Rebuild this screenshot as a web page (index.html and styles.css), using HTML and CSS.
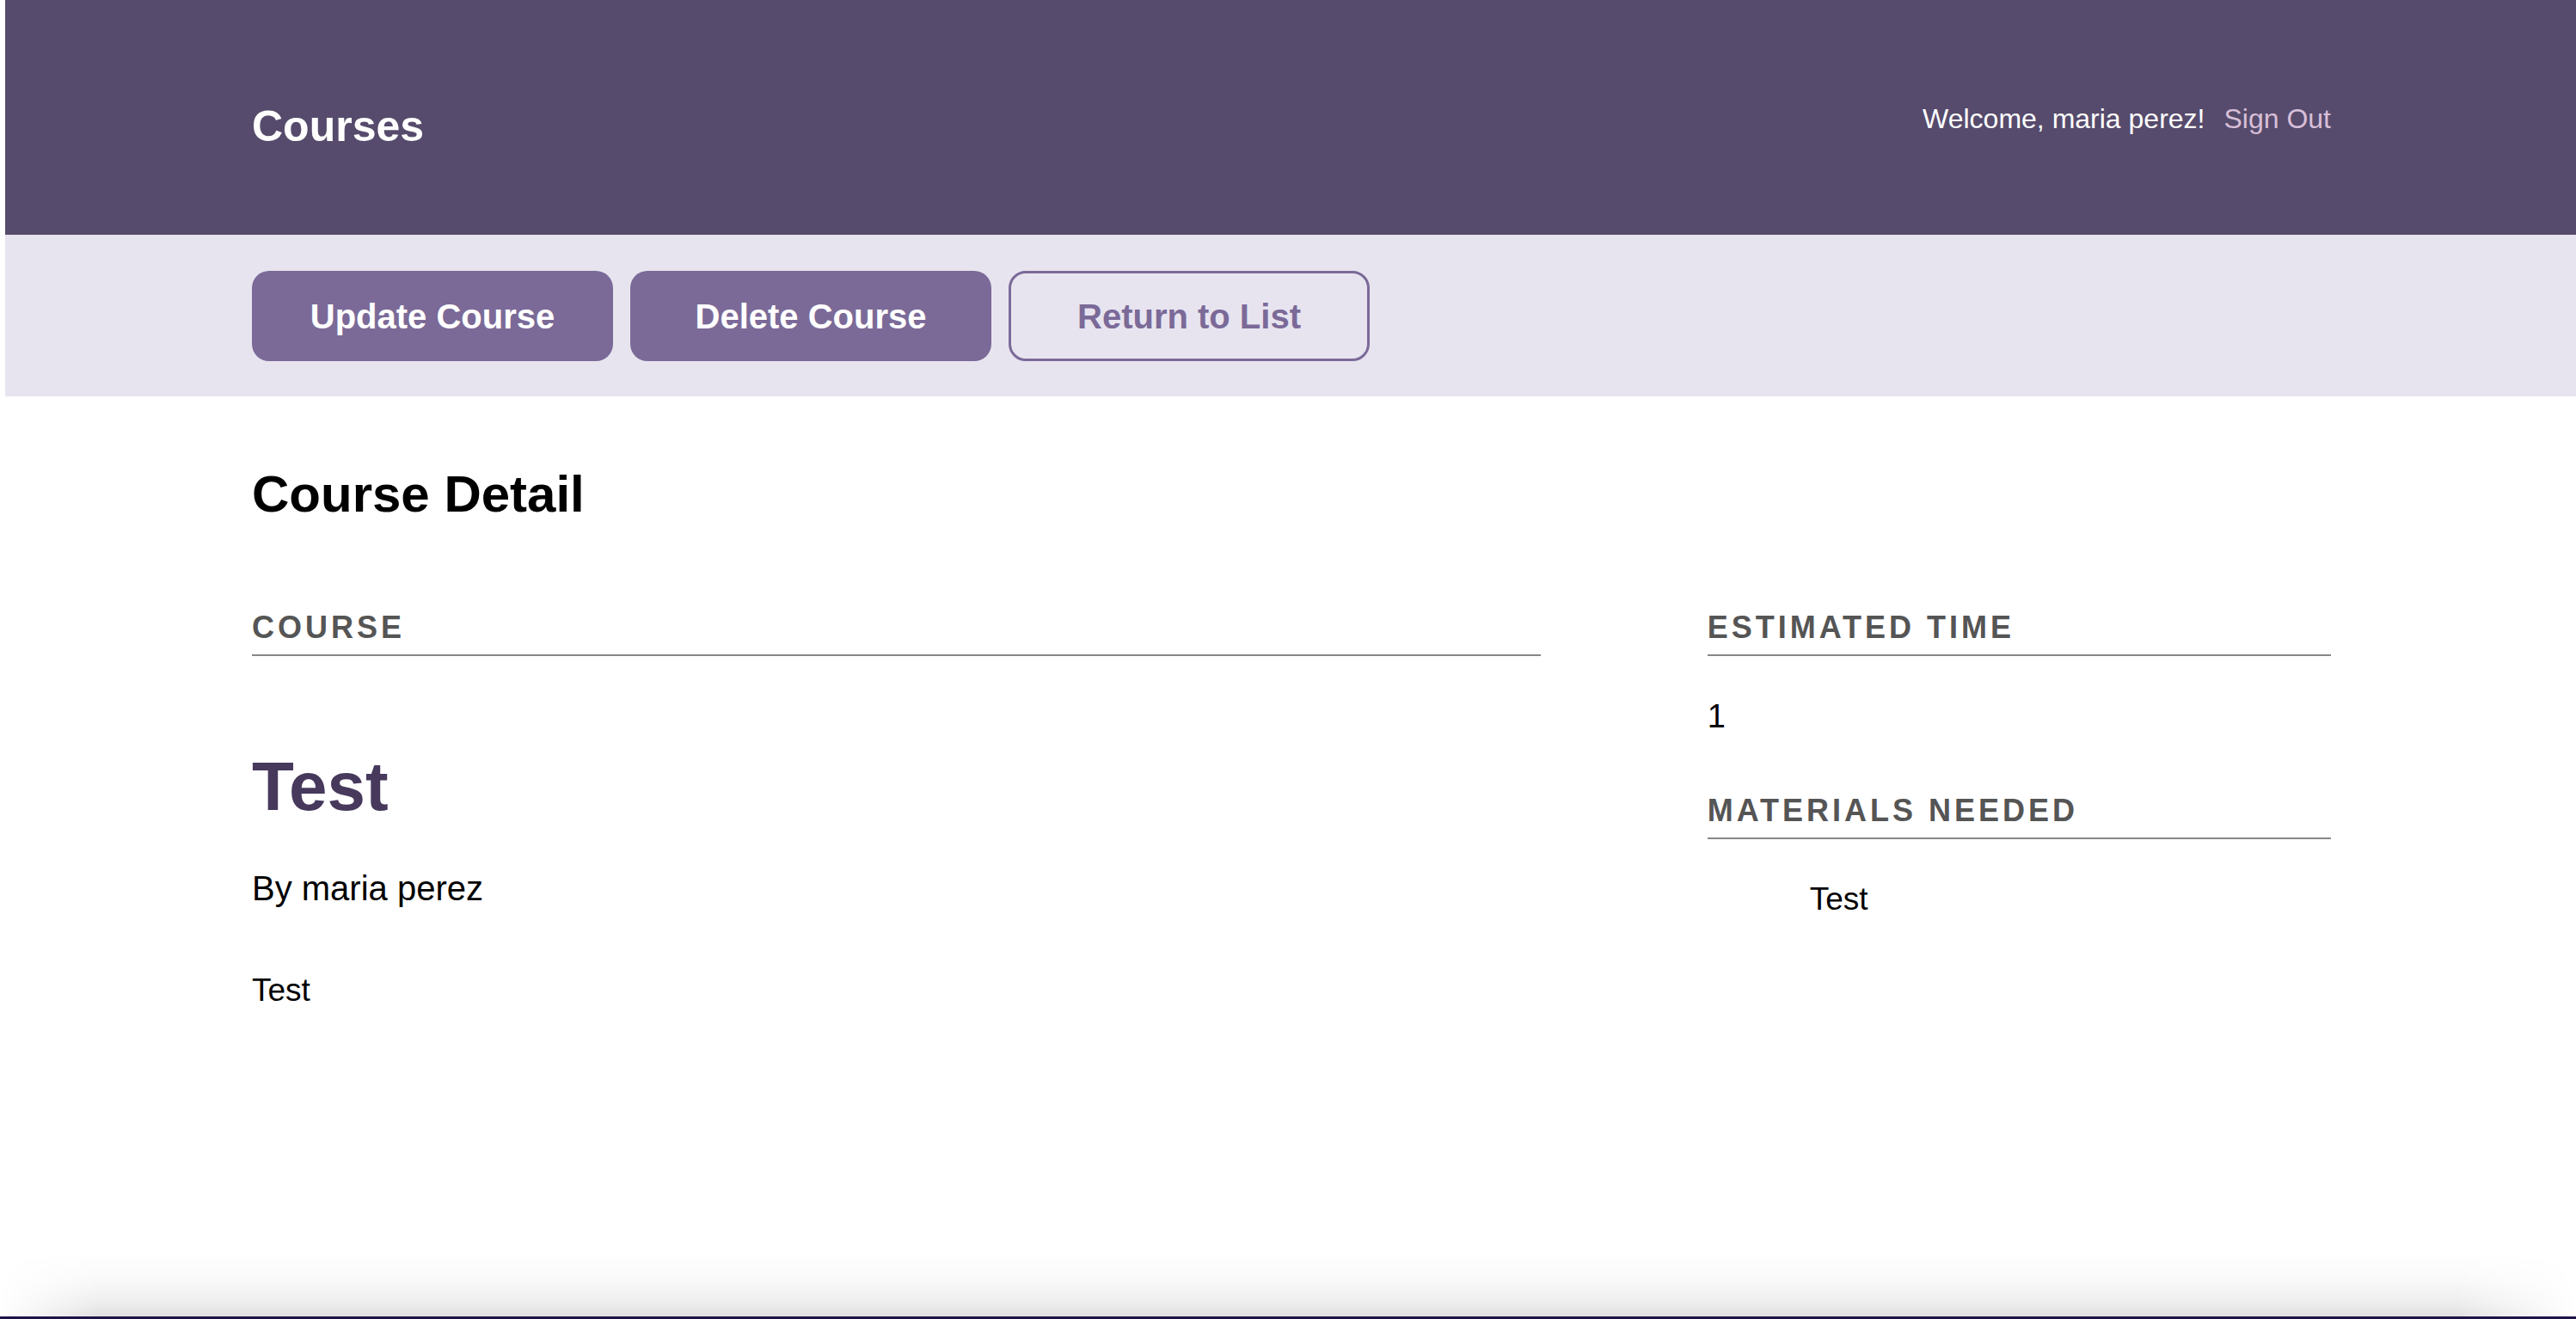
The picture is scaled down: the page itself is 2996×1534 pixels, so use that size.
FILE: index.html
```html
<!DOCTYPE html>
<html lang="en">
<head>
<meta charset="utf-8">
<title>Courses</title>
<link rel="stylesheet" href="styles.css">
</head>
<body>
<div class="page">
  <header class="header">
    <div class="wrap header-inner">
      <h1 class="logo">Courses</h1>
      <nav class="user-nav">
        <span>Welcome, maria perez!</span>
        <a class="sign-out" href="#">Sign Out</a>
      </nav>
    </div>
  </header>
  <div class="actions-bar">
    <div class="wrap actions">
      <a class="button" href="#">Update Course</a>
      <a class="button" href="#">Delete Course</a>
      <a class="button button-secondary" href="#">Return to List</a>
    </div>
  </div>
  <main class="main">
    <div class="wrap">
      <h2 class="page-title">Course Detail</h2>
      <div class="detail-grid">
        <div class="detail-col">
          <h3 class="label">COURSE</h3>
          <h4 class="course-title">Test</h4>
          <p class="byline">By maria perez</p>
          <p class="description">Test</p>
        </div>
        <div class="detail-col">
          <h3 class="label">ESTIMATED TIME</h3>
          <p class="time">1</p>
          <h3 class="label label-spaced">MATERIALS NEEDED</h3>
          <ul class="materials">
            <li>Test</li>
          </ul>
        </div>
      </div>
    </div>
  </main>
  <div class="edge-shadow"></div>
  <div class="edge"></div>
</div>
</body>
</html>
```

FILE: styles.css
```css
* {
  box-sizing: border-box;
}

html, body {
  margin: 0;
  padding: 0;
}

body {
  font-family: "Liberation Sans", Arial, Helvetica, sans-serif;
  color: #000;
  background: #fff;
}

.page {
  min-height: 100vh;
  display: flex;
  flex-direction: column;
}

.wrap {
  width: 2420px;
  margin: 0 auto;
  padding-left: 2px;
}

.header {
  margin-left: 6px;
  height: 273px;
  background: #564b6c;
}

.header-inner {
  display: flex;
  justify-content: space-between;
  align-items: flex-start;
  padding-top: 122px;
}

.logo {
  margin: 0;
  font-size: 50px;
  line-height: 1;
  font-weight: 700;
  color: #fff;
}

.user-nav {
  display: flex;
  gap: 22px;
  font-size: 32px;
  line-height: 1;
  color: #fff;
}

.sign-out {
  color: #d8bfd8;
  text-decoration: none;
}

.actions-bar {
  margin-left: 6px;
  background: #e7e4ef;
  padding: 42px 0 41px;
}

.actions {
  display: flex;
  gap: 20px;
}

.button {
  width: 420px;
  height: 105px;
  display: flex;
  align-items: center;
  justify-content: center;
  border-radius: 20px;
  background: #7b6a98;
  color: #fff;
  font-size: 40px;
  font-weight: 700;
  line-height: 1;
  text-decoration: none;
}

.button-secondary {
  background: transparent;
  border: 3px solid #7b6a98;
  color: #7b6a98;
}

.main {
  margin-left: 6px;
  flex: 1;
}

.page-title {
  margin: 84px 0 0;
  font-size: 60px;
  line-height: 1;
  font-weight: 700;
}

.detail-grid {
  display: grid;
  grid-template-columns: 1500fr 726fr;
  column-gap: 194px;
  margin-top: 107px;
}

.label {
  margin: 0;
  padding-bottom: 13px;
  border-bottom: 2px solid #888;
  font-size: 36px;
  line-height: 1;
  font-weight: 700;
  letter-spacing: 4px;
  color: #555;
}

.label-spaced {
  margin-top: 73px;
}

.course-title {
  margin: 112px 0 0;
  font-size: 80px;
  line-height: 1;
  font-weight: 700;
  color: #46395c;
}

.byline {
  margin: 58px 0 0;
  font-size: 40px;
  line-height: 1;
}

.description {
  margin: 80px 0 0;
  font-size: 37px;
  line-height: 1;
}

.time {
  margin: 51px 0 0;
  font-size: 38px;
  line-height: 1;
}

.materials {
  list-style: none;
  margin: 51px 0 0;
  padding: 0 0 0 119px;
  font-size: 37px;
  line-height: 1;
}

.edge-shadow {
  height: 76px;
  background: linear-gradient(to bottom, rgba(0, 0, 0, 0) 0%, rgba(0, 0, 0, 0.025) 45%, rgba(0, 0, 0, 0.07) 80%, rgba(0, 0, 0, 0.12) 100%);
  -webkit-mask-image: linear-gradient(to right, transparent 0, #000 115px, #000 calc(100% - 140px), transparent 100%);
  mask-image: linear-gradient(to right, transparent 0, #000 115px, #000 calc(100% - 140px), transparent 100%);
}

.edge {
  height: 3px;
  background: #1f1248;
}
```
